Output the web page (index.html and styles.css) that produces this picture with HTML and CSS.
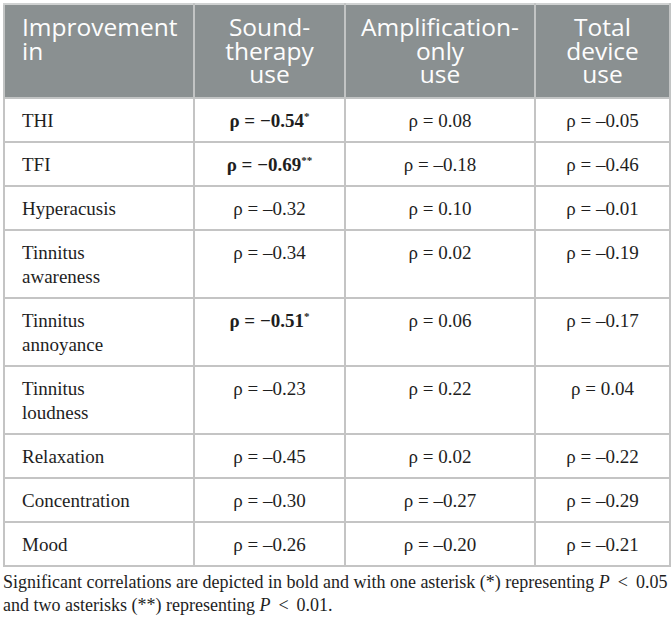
FILE: index.html
```html
<!DOCTYPE html>
<html lang="en">
<head>
    <meta charset="UTF-8">
    <title>Correlations table</title>
    <link rel="stylesheet" href="styles.css">
</head>
<body>

    <table class="corr">
        <colgroup>
            <col class="c1">
            <col class="c2">
            <col class="c3">
            <col class="c4">
        </colgroup>
        <thead>
            <tr>
                <th class="first">Improvement in</th>
                <th>Sound-<br>therapy<br>use</th>
                <th>Amplification-<br>only<br>use</th>
                <th>Total<br>device<br>use</th>
            </tr>
        </thead>
        <tbody>
            <tr>
                <td>THI</td>
                <td class="sig">ρ = −0.54<sup>*</sup></td>
                <td>ρ = 0.08</td>
                <td>ρ = –0.05</td>
            </tr>
            <tr>
                <td>TFI</td>
                <td class="sig">ρ = −0.69<sup>**</sup></td>
                <td>ρ = –0.18</td>
                <td>ρ = –0.46</td>
            </tr>
            <tr>
                <td>Hyperacusis</td>
                <td>ρ = –0.32</td>
                <td>ρ = 0.10</td>
                <td>ρ = –0.01</td>
            </tr>
            <tr>
                <td>Tinnitus<br>awareness</td>
                <td>ρ = –0.34</td>
                <td>ρ = 0.02</td>
                <td>ρ = –0.19</td>
            </tr>
            <tr>
                <td>Tinnitus<br>annoyance</td>
                <td class="sig">ρ = −0.51<sup>*</sup></td>
                <td>ρ = 0.06</td>
                <td>ρ = –0.17</td>
            </tr>
            <tr>
                <td>Tinnitus<br>loudness</td>
                <td>ρ = –0.23</td>
                <td>ρ = 0.22</td>
                <td>ρ = 0.04</td>
            </tr>
            <tr>
                <td>Relaxation</td>
                <td>ρ = –0.45</td>
                <td>ρ = 0.02</td>
                <td>ρ = –0.22</td>
            </tr>
            <tr>
                <td>Concentration</td>
                <td>ρ = –0.30</td>
                <td>ρ = –0.27</td>
                <td>ρ = –0.29</td>
            </tr>
            <tr>
                <td>Mood</td>
                <td>ρ = –0.26</td>
                <td>ρ = –0.20</td>
                <td>ρ = –0.21</td>
            </tr>
        </tbody>
    </table>

    <p class="note">Significant correlations are depicted in bold and with one asterisk (*) representing <i>P</i><span class="op">&lt;</span>0.05 and two asterisks (**) representing <i>P</i><span class="op">&lt;</span>0.01.</p>

</body>
</html>
```

FILE: styles.css
```css
* {
    margin: 0;
    padding: 0;
    box-sizing: border-box;
}

body {
    background: #fff;
    padding: 3px;
    font-family: "Liberation Serif", "DejaVu Serif", serif;
    color: #1e1e1e;
}

.corr {
    width: 666px;
    border-collapse: collapse;
    table-layout: fixed;
}

.c1 { width: 190px; }
.c2 { width: 151px; }
.c3 { width: 190px; }
.c4 { width: 135px; }

.corr th {
    background: #8a9091;
    color: #fdfdfd;
    font-family: "Open Sans", "Noto Sans", sans-serif;
    font-weight: 400;
    font-size: 24.5px;
    line-height: 23.5px;
    text-align: center;
    vertical-align: top;
    padding: 10px 6px 11px 6px;
    border: 2px solid #c2c4c4;
    border-top-color: #d0d2d2;
}

.corr th + th {
    border-left-color: #a4a9aa;
}

.corr th.first {
    text-align: left;
    padding-left: 17px;
}

.corr td {
    font-size: 19px;
    line-height: 24px;
    text-align: center;
    vertical-align: top;
    padding: 10px 6px 8px 6px;
    border: 2px solid #c4c4c4;
}

.corr td:first-child {
    text-align: left;
    padding-left: 17px;
}

.corr td.sig {
    font-weight: 700;
}

.corr sup {
    font-size: 11px;
    line-height: 0;
    vertical-align: 7px;
}

.note {
    margin-top: 4px;
    font-size: 18px;
    line-height: 23px;
}

.note .op {
    margin: 0 8px;
}
```
